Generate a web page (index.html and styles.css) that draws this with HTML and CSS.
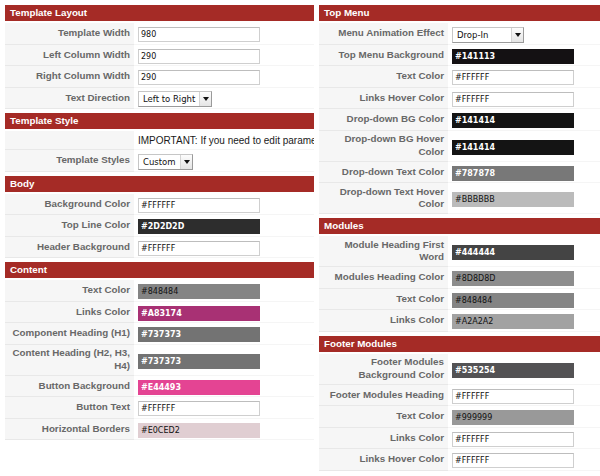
FILE: index.html
```html
<!DOCTYPE html>
<html lang="en">
<head>
  <meta charset="UTF-8" />
  <title>Template Parameters</title>
  <link rel="stylesheet" href="styles.css">
</head>
<body>
  <div class="page">
    <div class="column">
      <div class="panel">
        <h3 class="panel-title">Template Layout</h3>
        <div class="row"><div class="row-label">Template Width</div><div class="row-field"><input class="field" value="980" readonly></div></div>
        <div class="row"><div class="row-label">Left Column Width</div><div class="row-field"><input class="field" value="290" readonly></div></div>
        <div class="row"><div class="row-label">Right Column Width</div><div class="row-field"><input class="field" value="290" readonly></div></div>
        <div class="row"><div class="row-label">Text Direction</div><div class="row-field"><span class="select select-wide"><span class="select-text">Left to Right</span><span class="select-arrow"></span></span></div></div>
      </div>

      <div class="panel">
        <h3 class="panel-title">Template Style</h3>
        <div class="row row-note"><div class="row-label"></div><div class="row-field note"><span>IMPORTANT: If you need to edit parameters of the template, select Custom first.</span></div></div>
        <div class="row"><div class="row-label">Template Styles</div><div class="row-field"><span class="select select-short"><span class="select-text">Custom</span><span class="select-arrow"></span></span></div></div>
      </div>

      <div class="panel">
        <h3 class="panel-title">Body</h3>
        <div class="row"><div class="row-label">Background Color</div><div class="row-field"><input class="field color" value="#FFFFFF" readonly></div></div>
        <div class="row"><div class="row-label">Top Line Color</div><div class="row-field"><input class="field color dark" value="#2D2D2D" style="background:#2D2D2D" readonly></div></div>
        <div class="row"><div class="row-label">Header Background</div><div class="row-field"><input class="field color" value="#FFFFFF" readonly></div></div>
      </div>

      <div class="panel">
        <h3 class="panel-title">Content</h3>
        <div class="row"><div class="row-label">Text Color</div><div class="row-field"><input class="field color filled" value="#848484" style="background:#848484" readonly></div></div>
        <div class="row"><div class="row-label">Links Color</div><div class="row-field"><input class="field color dark" value="#A83174" style="background:#A83174" readonly></div></div>
        <div class="row"><div class="row-label">Component Heading (H1)</div><div class="row-field"><input class="field color dark" value="#737373" style="background:#737373" readonly></div></div>
        <div class="row"><div class="row-label">Content Heading (H2, H3, H4)</div><div class="row-field"><input class="field color dark" value="#737373" style="background:#737373" readonly></div></div>
        <div class="row"><div class="row-label">Button Background</div><div class="row-field"><input class="field color dark" value="#E44493" style="background:#E44493" readonly></div></div>
        <div class="row"><div class="row-label">Button Text</div><div class="row-field"><input class="field color" value="#FFFFFF" readonly></div></div>
        <div class="row"><div class="row-label">Horizontal Borders</div><div class="row-field"><input class="field color filled" value="#E0CED2" style="background:#E0CED2" readonly></div></div>
      </div>
    </div>

    <div class="column">
      <div class="panel">
        <h3 class="panel-title">Top Menu</h3>
        <div class="row"><div class="row-label">Menu Animation Effect</div><div class="row-field"><span class="select select-mid"><span class="select-text">Drop-In</span><span class="select-arrow"></span></span></div></div>
        <div class="row"><div class="row-label">Top Menu Background</div><div class="row-field"><input class="field color dark" value="#141113" style="background:#141113" readonly></div></div>
        <div class="row"><div class="row-label">Text Color</div><div class="row-field"><input class="field color" value="#FFFFFF" readonly></div></div>
        <div class="row"><div class="row-label">Links Hover Color</div><div class="row-field"><input class="field color" value="#FFFFFF" readonly></div></div>
        <div class="row"><div class="row-label">Drop-down BG Color</div><div class="row-field"><input class="field color dark" value="#141414" style="background:#141414" readonly></div></div>
        <div class="row"><div class="row-label">Drop-down BG Hover Color</div><div class="row-field"><input class="field color dark" value="#141414" style="background:#141414" readonly></div></div>
        <div class="row"><div class="row-label">Drop-down Text Color</div><div class="row-field"><input class="field color dark" value="#787878" style="background:#787878" readonly></div></div>
        <div class="row"><div class="row-label">Drop-down Text Hover Color</div><div class="row-field"><input class="field color filled" value="#BBBBBB" style="background:#BBBBBB" readonly></div></div>
      </div>

      <div class="panel">
        <h3 class="panel-title">Modules</h3>
        <div class="row"><div class="row-label">Module Heading First Word</div><div class="row-field"><input class="field color dark" value="#444444" style="background:#444444" readonly></div></div>
        <div class="row"><div class="row-label">Modules Heading Color</div><div class="row-field"><input class="field color filled" value="#8D8D8D" style="background:#8D8D8D" readonly></div></div>
        <div class="row"><div class="row-label">Text Color</div><div class="row-field"><input class="field color filled" value="#848484" style="background:#848484" readonly></div></div>
        <div class="row"><div class="row-label">Links Color</div><div class="row-field"><input class="field color filled" value="#A2A2A2" style="background:#A2A2A2" readonly></div></div>
      </div>

      <div class="panel">
        <h3 class="panel-title">Footer Modules</h3>
        <div class="row"><div class="row-label">Footer Modules Background Color</div><div class="row-field"><input class="field color dark" value="#535254" style="background:#535254" readonly></div></div>
        <div class="row"><div class="row-label">Footer Modules Heading</div><div class="row-field"><input class="field color" value="#FFFFFF" readonly></div></div>
        <div class="row"><div class="row-label">Text Color</div><div class="row-field"><input class="field color filled" value="#999999" style="background:#999999" readonly></div></div>
        <div class="row"><div class="row-label">Links Color</div><div class="row-field"><input class="field color" value="#FFFFFF" readonly></div></div>
        <div class="row"><div class="row-label">Links Hover Color</div><div class="row-field"><input class="field color" value="#FFFFFF" readonly></div></div>
      </div>
    </div>
  </div>
</body>
</html>
```

FILE: styles.css
```css
html, body { margin: 0; padding: 0; overflow: hidden; background: #fff; }
body { font-family: "Liberation Sans", Arial, sans-serif; color: #222; }

.page { display: flex; align-items: flex-start; gap: 5px; padding: 5px; }
.column { flex: 0 0 309px; width: 309px; }

.panel { margin-bottom: 4px; }
.panel-title { margin: 0 0 2px; height: 16px; line-height: 16px; padding-left: 5px; background: #a52b26; color: #fff; font-size: 9.8px; font-weight: bold; }

.row { display: flex; min-height: 21.5px; }
.row-note { min-height: 19px; }
.row-label {
  flex: 0 0 129px; box-sizing: border-box;
  display: flex; align-items: center; justify-content: flex-end;
  padding: 2.5px 4px; text-align: right;
  background: #f6f6f6; border-bottom: 1px solid #e8e8e8;
  color: #686868; font-size: 9.8px; font-weight: bold; line-height: 12.5px;
}
.row-field { flex: 1; min-width: 0; display: flex; align-items: center; padding: 3px 4px 0; border-bottom: 1px solid #f5f5f5; }

.note { white-space: nowrap; overflow: hidden; font-size: 10px; color: #1a1a1a; padding-top: 0; }

.field {
  box-sizing: border-box; width: 122px; height: 15px; margin: 0; padding: 0 2px;
  border: 1px solid #cfcfcf; border-top-color: #bdbdbd; border-radius: 0;
  background: #fff; color: #111; outline: none;
  font-family: "DejaVu Sans", sans-serif; font-size: 8px;
}
.field.filled, .field.dark { border-color: transparent; }
.field.dark { color: #fff; font-weight: bold; }

.select {
  box-sizing: border-box; display: inline-flex; height: 16px;
  border: 1px solid #c6c6c6; border-right-color: #9a9a9a; border-bottom-color: #9a9a9a;
  background: #fff; font-family: "DejaVu Sans", sans-serif; font-size: 8.5px; color: #111;
}
.select-wide { width: 74px; }
.select-short { width: 55px; }
.select-mid { width: 72px; }
.select-text { flex: 1; padding-left: 4px; line-height: 14px; }
.select-arrow {
  flex: 0 0 11px; display: flex; align-items: center; justify-content: center;
  border-left: 1px solid #d4d4d4; background: linear-gradient(#fdfdfd, #e4e4e4);
}
.select-arrow::after { content: ""; border-left: 3px solid transparent; border-right: 3px solid transparent; border-top: 4px solid #111; }
```
